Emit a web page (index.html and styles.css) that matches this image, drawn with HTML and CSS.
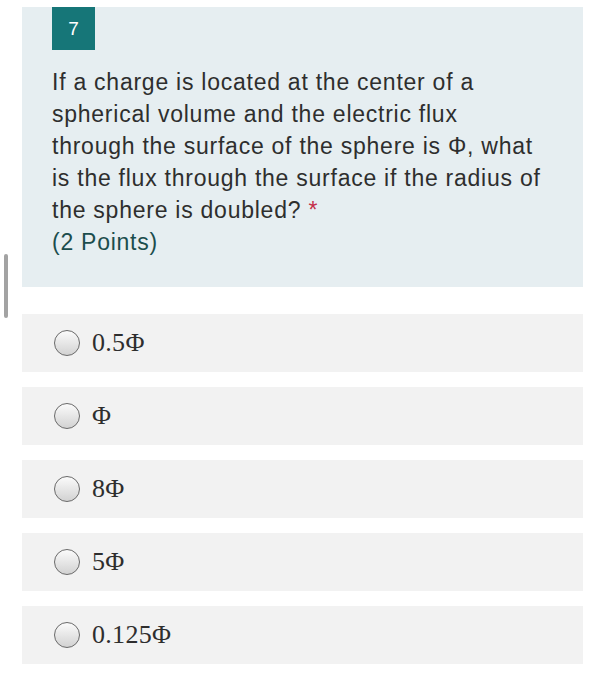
FILE: index.html
```html
<!DOCTYPE html>
<html>
<head>
<meta charset="utf-8">
<link rel="stylesheet" href="styles.css">
</head>
<body>
<div class="scrollbar"></div>
<main class="form">
  <section class="question">
    <div class="badge">7</div>
    <p class="qtext">If a charge is located at the center of a<br>spherical volume and the electric flux<br>through the surface of the sphere is Φ, what<br>is the flux through the surface if the radius of<br>the sphere is doubled? <span class="req">*</span><br><span class="points">(2 Points)</span></p>
  </section>
  <div class="options">
    <label class="option"><span class="radio"></span><span class="otext">0.5Φ</span></label>
    <label class="option"><span class="radio"></span><span class="otext">Φ</span></label>
    <label class="option"><span class="radio"></span><span class="otext">8Φ</span></label>
    <label class="option"><span class="radio"></span><span class="otext">5Φ</span></label>
    <label class="option"><span class="radio"></span><span class="otext">0.125Φ</span></label>
  </div>
</main>
</body>
</html>
```
FILE: styles.css
```css
html, body {
  margin: 0;
  padding: 0;
  background: #ffffff;
}
body {
  width: 607px;
  height: 700px;
  overflow: hidden;
  position: relative;
  font-family: "Liberation Sans", Arial, sans-serif;
}
.scrollbar {
  position: absolute;
  left: 4px;
  top: 254px;
  width: 4px;
  height: 64px;
  border-radius: 2px;
  background: #a3a3a3;
}
.form {
  margin: 7px 0 0 22px;
  width: 561px;
}
.question {
  background: #e6eef1;
  padding: 0 20px 29px 30px;
}
.badge {
  width: 43px;
  height: 43px;
  background: #167678;
  color: #ffffff;
  font-size: 19px;
  display: flex;
  align-items: center;
  justify-content: center;
}
.qtext {
  margin: 16px 0 0 0;
  font-size: 23px;
  letter-spacing: 0.75px;
  line-height: 32px;
  color: #2e2e2e;
  white-space: nowrap;
}
.req {
  color: #c4314b;
}
.points {
  color: #1b4d4d;
}
.options {
  margin-top: 27px;
  display: flex;
  flex-direction: column;
  gap: 15px;
}
.option {
  height: 58px;
  background: #f2f2f2;
  display: flex;
  align-items: center;
  padding-left: 32px;
}
.radio {
  width: 24px;
  height: 24px;
  border-radius: 50%;
  border: 1px solid #6a6a6a;
  background: linear-gradient(#fbfbfb, #d2d2d2);
  flex: none;
}
.otext {
  margin-left: 12px;
  font-family: "Liberation Serif", "Times New Roman", serif;
  font-size: 26px;
  letter-spacing: 0.3px;
  color: #2e2e2e;
}
```
